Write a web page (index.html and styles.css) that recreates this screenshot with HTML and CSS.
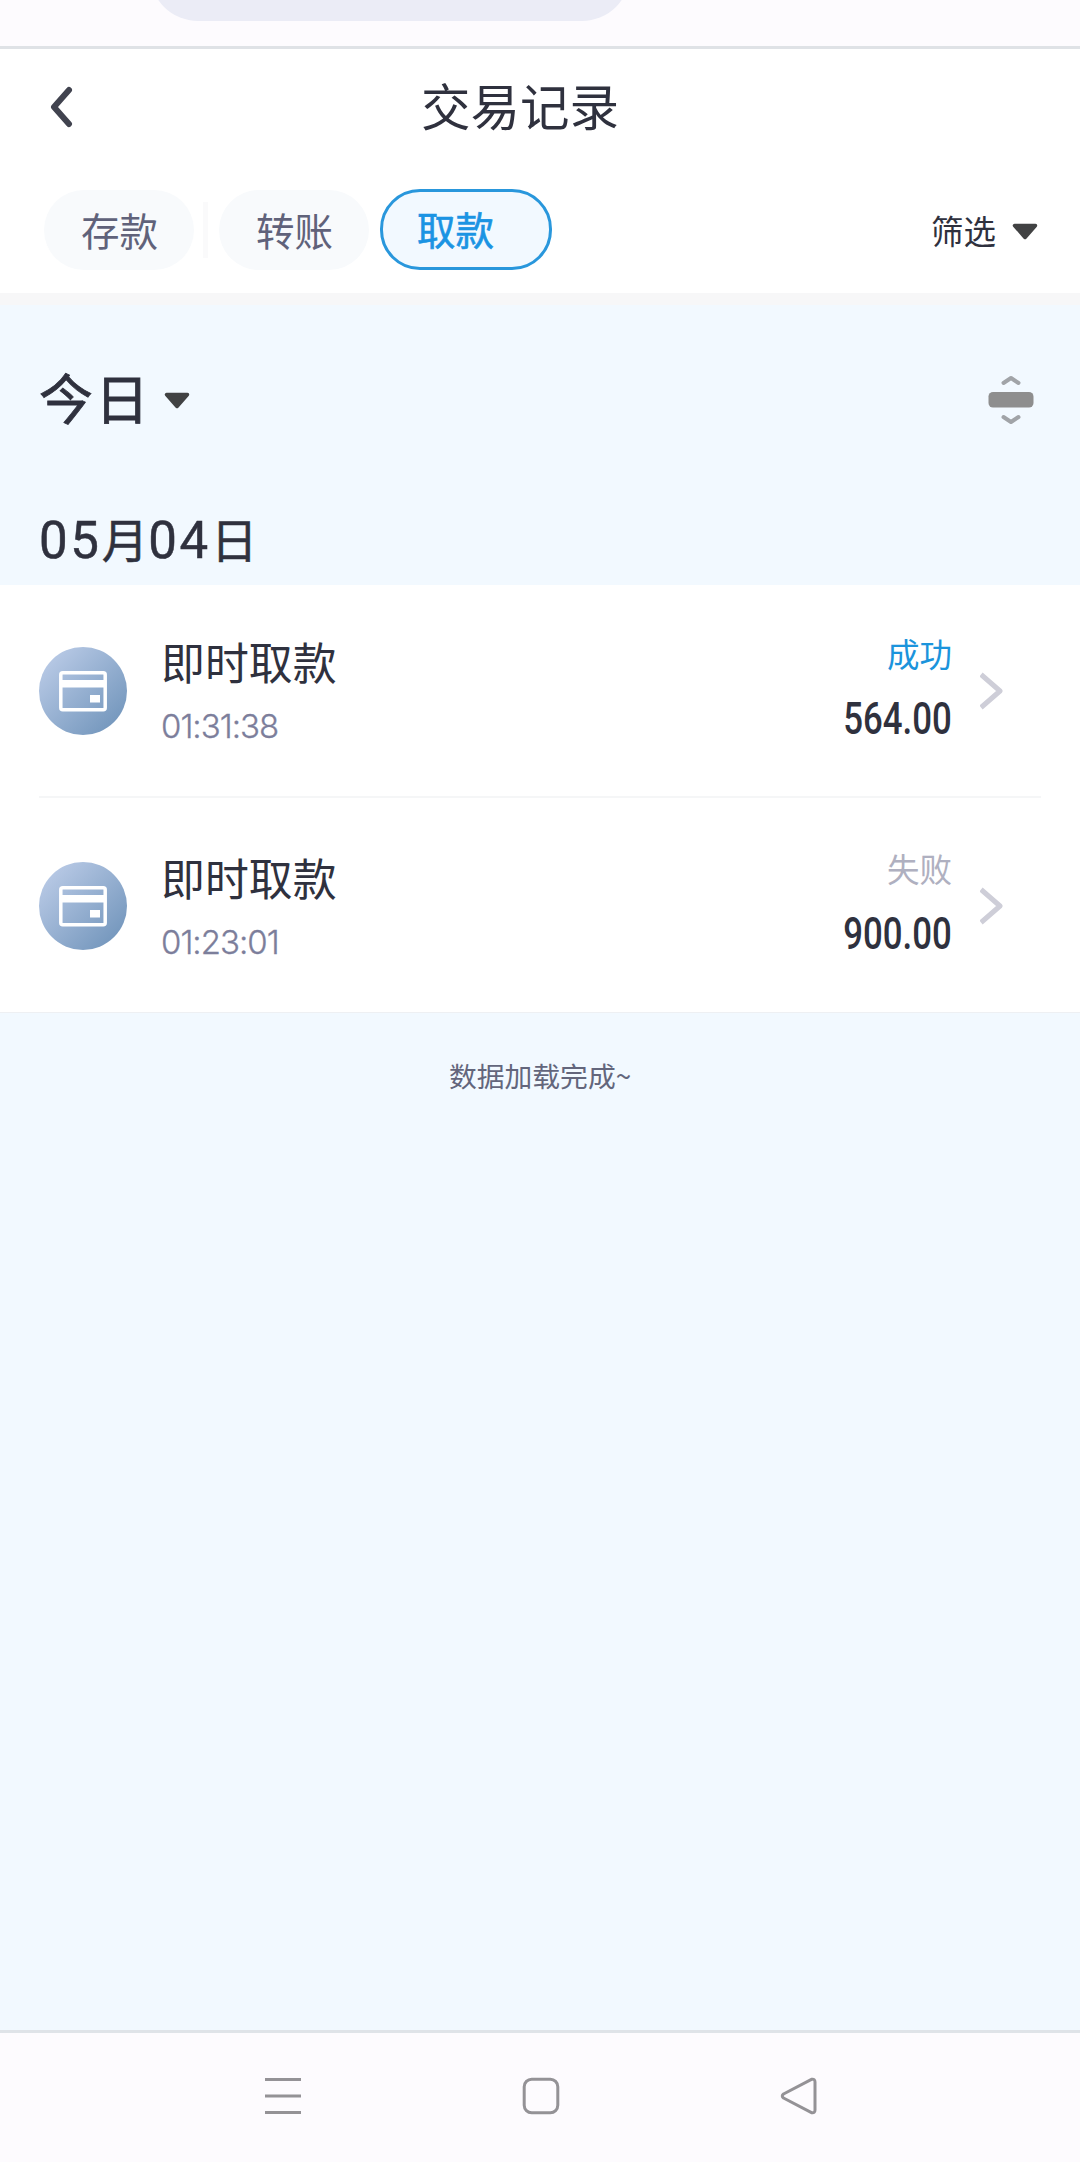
FILE: index.html
```html
<!DOCTYPE html>
<html lang="zh-CN">
<head>
<meta charset="utf-8">
<title>交易记录</title>
<link rel="stylesheet" href="styles.css">
</head>
<body>
<div class="screen">
  <div class="browser-strip"><div class="address-pill"></div></div>

  <header class="header">
    <svg class="back" viewBox="0 0 24 42"><path d="M20 4 L5 21 L20 38"/></svg>
    <h1 class="title">交易记录</h1>
  </header>

  <nav class="tabs">
    <span class="tab">存款</span>
    <span class="tab-divider"></span>
    <span class="tab">转账</span>
    <span class="tab tab-active">取款</span>
    <span class="filter">筛选
      <svg class="caret" viewBox="0 0 26 17"><path d="M2.500 2.500 H23.500 L13 14.500 Z"/></svg>
    </span>
  </nav>

  <main class="content">
    <div class="range">
      <span class="range-label">今日</span>
      <svg class="caret" viewBox="0 0 26 17"><path d="M2.500 2.500 H23.500 L13 14.500 Z"/></svg>
      <svg class="sort" viewBox="0 0 46 50"><path d="M15.500 8 L23 3 L30.500 8 M15.500 42 L23 47 L30.500 42"/><rect x="0.500" y="17" width="45" height="15.500" rx="4.500"/></svg>
    </div>
    <h2 class="date"><span class="num">05</span>月<span class="num">04</span>日</h2>

    <ul class="list">
      <li class="row">
        <svg class="badge" viewBox="0 0 88 88">
          <defs><linearGradient id="steel" x1="0.1" y1="0.1" x2="0.9" y2="0.9"><stop offset="0" stop-color="#b9cae6"/><stop offset="1" stop-color="#7396bc"/></linearGradient></defs>
          <circle cx="44" cy="44" r="44" fill="url(#steel)"/>
          <rect class="card-line" x="21.800" y="25.800" width="44.400" height="37" rx="2"/>
          <path class="card-fill" d="M22 33 H66 V40.500 H22 Z M51 48 H61 V55.500 H51 Z"/>
        </svg>
        <div class="info"><span class="name">即时取款</span><span class="time">01:31:38</span></div>
        <div class="result"><span class="status status-ok">成功</span><span class="amount">564.00</span></div>
        <svg class="more" viewBox="0 0 24 38"><path d="M1 2.500 L20 19 L1 35.500"/></svg>
      </li>
      <li class="row">
        <svg class="badge" viewBox="0 0 88 88">
          <circle cx="44" cy="44" r="44" fill="url(#steel)"/>
          <rect class="card-line" x="21.800" y="25.800" width="44.400" height="37" rx="2"/>
          <path class="card-fill" d="M22 33 H66 V40.500 H22 Z M51 48 H61 V55.500 H51 Z"/>
        </svg>
        <div class="info"><span class="name">即时取款</span><span class="time">01:23:01</span></div>
        <div class="result"><span class="status">失败</span><span class="amount">900.00</span></div>
        <svg class="more" viewBox="0 0 24 38"><path d="M1 2.500 L20 19 L1 35.500"/></svg>
      </li>
    </ul>
    <p class="end">数据加载完成~</p>
  </main>

  <footer class="system-bar">
    <svg viewBox="0 0 38 38"><path d="M1 2.500 H37 M1 19 H37 M1 35.500 H37"/></svg>
    <svg viewBox="0 0 38 38"><rect x="2.200" y="2.200" width="33.600" height="33.600" rx="7.500"/></svg>
    <svg viewBox="0 0 38 38"><path d="M3.500 17 L31.500 2.300 Q35 1.500 35 5 V33 Q35 36.500 31.500 35.700 L3.500 21 Q1 19 3.500 17 Z"/></svg>
  </footer>
</div>
</body>
</html>
```
FILE: styles.css
```css
* { box-sizing: border-box; margin: 0; padding: 0; }
body { font-family: "Noto Sans CJK SC", sans-serif; color: #2f313e; background: #f2f9ff; }
svg { display: block; flex: none; }
h1, h2 { font-weight: 400; }
.screen { height: 2162px; display: flex; flex-direction: column; overflow: hidden; }

.browser-strip { height: 49px; flex: none; background: #fdfbfe; border-bottom: 3px solid #dfe2e6; overflow: hidden; }
.address-pill { width: 480px; height: 96px; margin: -75px 0 0 150px; border-radius: 48px; background: #ebecf6; }

.header { height: 122px; flex: none; display: flex; align-items: center; padding: 0 0 6px 49px; background: #fff; }
.back { width: 24px; height: 42px; }
.back path { fill: none; stroke: #41434f; stroke-width: 6; stroke-linecap: round; stroke-linejoin: round; }
.title { margin-left: 348px; padding-bottom: 4px; font-size: 49.500px; line-height: 74px; }

.tabs { height: 134px; flex: none; display: flex; align-items: center; padding: 0 42px 5px 44px; background: #fff; border-bottom: 12px solid #f7f7f8; }
.tab { width: 150px; height: 80px; padding-left: 37px; border-radius: 40px; background: #f8fafc; color: #60627a; font-size: 38.500px; line-height: 78px; }
.tab-divider { width: 5px; height: 56px; margin: 0 11px 0 9px; background: #fafafb; }
.tab-active { width: 172px; height: 81px; margin-left: 11px; padding-left: 34px; border: 3px solid #2997dc; background: #f2f9ff; color: #1b94e3; line-height: 73px; -webkit-text-stroke: .6px; }
.filter { display: flex; align-items: center; gap: 16px; margin-left: auto; font-size: 32.500px; line-height: 50px; }
.filter .caret { margin-top: 4px; }
.caret { width: 26px; height: 17px; }
.caret path { fill: #414243; stroke: #414243; stroke-width: 3.500; stroke-linejoin: round; }

.content { flex: 1; }
.range { display: flex; align-items: center; height: 190px; padding: 0 46px 0 39px; }
.range-label { padding-bottom: 7px; font-size: 54px; line-height: 80px; letter-spacing: 2px; margin-right: 13px; -webkit-text-stroke: .8px; }
.sort { width: 46px; height: 50px; margin-left: auto; }
.sort path { fill: none; stroke: #a1a4a8; stroke-width: 4; stroke-linecap: round; stroke-linejoin: round; }
.sort rect { fill: #8e8e8e; }
.date { height: 90px; padding-left: 39px; font-size: 46.500px; line-height: 86px; -webkit-text-stroke: .5px; }
.num { font: 400 51px "Roboto", sans-serif; letter-spacing: 2.700px; }

.list { list-style: none; height: 428px; padding: 0 39px; background: #fff; border-bottom: 1px solid #eef0f3; }
.row { height: 211px; display: flex; align-items: center; }
.row + .row { height: 218px; border-top: 2px solid #f5f6f7; }
.badge { width: 88px; height: 88px; }
.card-line { fill: none; stroke: #fff; stroke-width: 3.500; }
.card-fill { fill: #fff; }
.info { display: flex; flex-direction: column; margin-left: 34px; gap: 7px; }
.name { font-size: 43.900px; line-height: 64px; }
.time { font: 300 33px/52px "Inter", sans-serif; letter-spacing: -1px; color: #7c7e9b; -webkit-text-stroke: .3px; }
.result { display: flex; flex-direction: column; align-items: flex-end; gap: 10px; padding-bottom: 8px; margin-left: auto; }
.status { font-size: 32.500px; line-height: 56px; color: #afb0c0; }
.status-ok { color: #1b94dc; }
.amount { font: 500 43.500px/58px "Roboto", sans-serif; transform: scaleX(.8); transform-origin: right; }
.more { width: 24px; height: 38px; margin: 0 37px 0 28px; }
.more path { fill: none; stroke: #ceced8; stroke-width: 5; stroke-linejoin: round; }
.end { padding-top: 41px; text-align: center; font-size: 27.800px; line-height: 42px; color: #63667c; }

.system-bar { height: 132px; flex: none; display: flex; justify-content: space-between; padding: 44px 262px 0 264px; border-top: 3px solid #dfe3e8; background: #fdfbfe; }
.system-bar svg { width: 38px; height: 38px; fill: none; stroke: #949296; stroke-width: 3; stroke-linejoin: round; }
```
